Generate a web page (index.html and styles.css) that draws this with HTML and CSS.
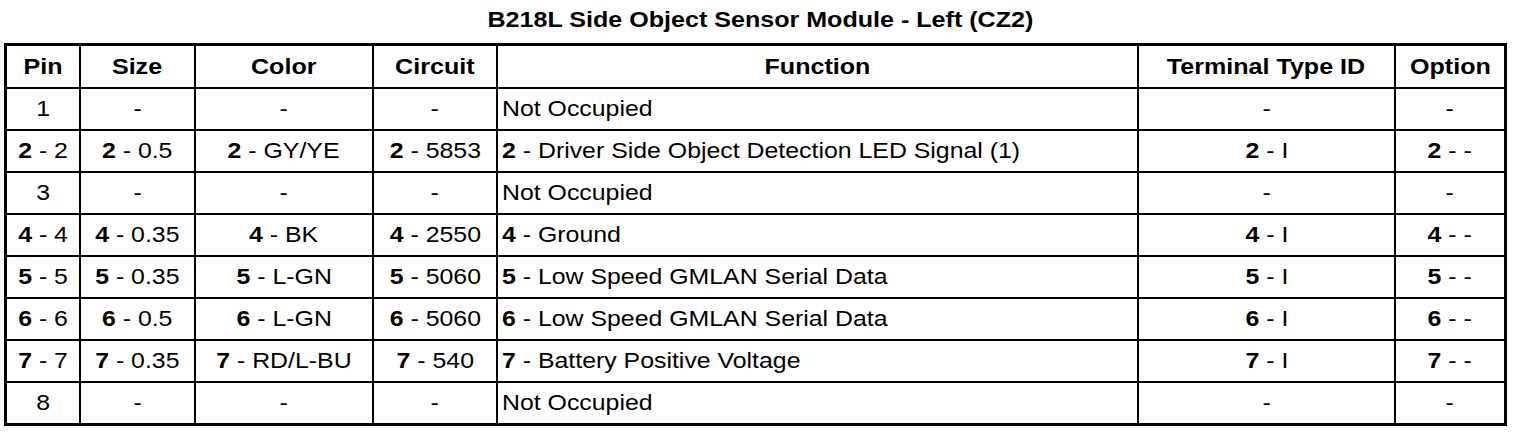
FILE: index.html
```html
<!DOCTYPE html>
<html>
<head>
<meta charset="utf-8">
<link rel="stylesheet" href="styles.css">
</head>
<body>
<h1 class="title"><span class="t">B218L Side Object Sensor Module - Left (CZ2)</span></h1>
<table class="pins">
  <colgroup>
    <col class="c-pin"><col class="c-size"><col class="c-color"><col class="c-circuit"><col class="c-func"><col class="c-term"><col class="c-opt">
  </colgroup>
  <thead>
    <tr><th><span class="t">Pin</span></th><th><span class="t">Size</span></th><th><span class="t">Color</span></th><th><span class="t">Circuit</span></th><th><span class="t">Function</span></th><th><span class="t">Terminal Type ID</span></th><th><span class="t">Option</span></th></tr>
  </thead>
  <tbody>
    <tr><td><span class="t">1</span></td><td><span class="t">-</span></td><td><span class="t">-</span></td><td><span class="t">-</span></td><td class="fn"><span class="t">Not Occupied</span></td><td><span class="t">-</span></td><td><span class="t">-</span></td></tr>
    <tr><td><span class="t"><b>2</b> - 2</span></td><td><span class="t"><b>2</b> - 0.5</span></td><td><span class="t"><b>2</b> - GY/YE</span></td><td><span class="t"><b>2</b> - 5853</span></td><td class="fn"><span class="t"><b>2</b> - Driver Side Object Detection LED Signal (1)</span></td><td><span class="t"><b>2</b> - I</span></td><td><span class="t"><b>2</b> - -</span></td></tr>
    <tr><td><span class="t">3</span></td><td><span class="t">-</span></td><td><span class="t">-</span></td><td><span class="t">-</span></td><td class="fn"><span class="t">Not Occupied</span></td><td><span class="t">-</span></td><td><span class="t">-</span></td></tr>
    <tr><td><span class="t"><b>4</b> - 4</span></td><td><span class="t"><b>4</b> - 0.35</span></td><td><span class="t"><b>4</b> - BK</span></td><td><span class="t"><b>4</b> - 2550</span></td><td class="fn"><span class="t"><b>4</b> - Ground</span></td><td><span class="t"><b>4</b> - I</span></td><td><span class="t"><b>4</b> - -</span></td></tr>
    <tr><td><span class="t"><b>5</b> - 5</span></td><td><span class="t"><b>5</b> - 0.35</span></td><td><span class="t"><b>5</b> - L-GN</span></td><td><span class="t"><b>5</b> - 5060</span></td><td class="fn"><span class="t"><b>5</b> - Low Speed GMLAN Serial Data</span></td><td><span class="t"><b>5</b> - I</span></td><td><span class="t"><b>5</b> - -</span></td></tr>
    <tr><td><span class="t"><b>6</b> - 6</span></td><td><span class="t"><b>6</b> - 0.5</span></td><td><span class="t"><b>6</b> - L-GN</span></td><td><span class="t"><b>6</b> - 5060</span></td><td class="fn"><span class="t"><b>6</b> - Low Speed GMLAN Serial Data</span></td><td><span class="t"><b>6</b> - I</span></td><td><span class="t"><b>6</b> - -</span></td></tr>
    <tr><td><span class="t"><b>7</b> - 7</span></td><td><span class="t"><b>7</b> - 0.35</span></td><td><span class="t"><b>7</b> - RD/L-BU</span></td><td><span class="t"><b>7</b> - 540</span></td><td class="fn"><span class="t"><b>7</b> - Battery Positive Voltage</span></td><td><span class="t"><b>7</b> - I</span></td><td><span class="t"><b>7</b> - -</span></td></tr>
    <tr><td><span class="t">8</span></td><td><span class="t">-</span></td><td><span class="t">-</span></td><td><span class="t">-</span></td><td class="fn"><span class="t">Not Occupied</span></td><td><span class="t">-</span></td><td><span class="t">-</span></td></tr>
  </tbody>
</table>
</body>
</html>
```
FILE: styles.css
```css
html, body {
  margin: 0;
  padding: 0;
  background: #fff;
}
body {
  padding: 0 0 0 4px;
  font-family: "Liberation Sans", Arial, sans-serif;
  color: #000;
}
.t {
  display: inline-block;
  transform: scaleX(1.13);
  transform-origin: center;
}
.title {
  margin: 0;
  height: 43px;
  line-height: 39px;
  font-size: 22px;
  font-weight: bold;
  text-align: center;
  padding-right: 4px;
}
.title .t {
  transform: scaleX(1.14);
}
.pins {
  border-collapse: separate;
  border-spacing: 2px;
  border: 1px solid #000;
  background: #000;
  table-layout: fixed;
  width: 1503px;
  font-size: 22px;
}
.c-pin { width: 72px; }
.c-size { width: 113px; }
.c-color { width: 176px; }
.c-circuit { width: 122px; }
.c-func { width: 639px; }
.c-term { width: 255px; }
.c-opt { width: 108px; }
.pins th, .pins td {
  background: #fff;
  padding: 0;
  height: 40px;
  text-align: center;
  vertical-align: middle;
  white-space: nowrap;
}
.pins th {
  height: 41px;
  font-weight: bold;
}
.pins th .t {
  transform: scaleX(1.14);
}
.pins td.fn {
  text-align: left;
  padding-left: 4px;
}
.pins td.fn .t {
  transform-origin: left center;
}
```
